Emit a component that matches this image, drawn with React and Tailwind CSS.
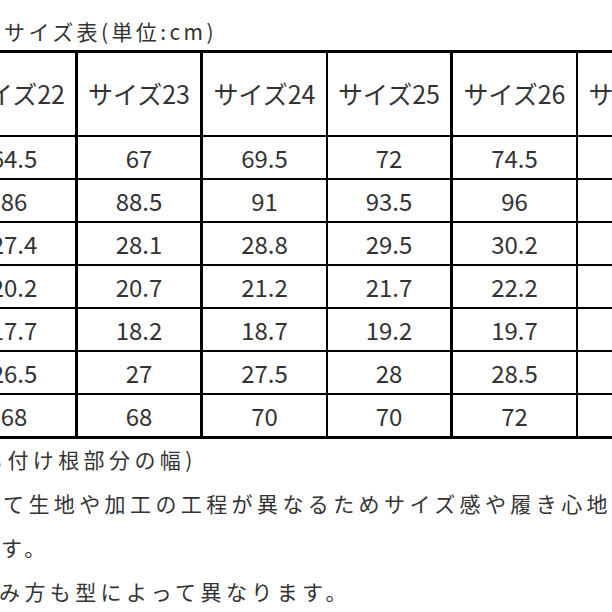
import React from 'react';

const sizes = ['サイズ22', 'サイズ23', 'サイズ24', 'サイズ25', 'サイズ26', 'サイズ27'];

// rows of measurements, the last column is left blank as in the source
const rows = [
  ['64.5', '67', '69.5', '72', '74.5', ''],
  ['86', '88.5', '91', '93.5', '96', ''],
  ['27.4', '28.1', '28.8', '29.5', '30.2', ''],
  ['20.2', '20.7', '21.2', '21.7', '22.2', ''],
  ['17.7', '18.2', '18.7', '19.2', '19.7', ''],
  ['26.5', '27', '27.5', '28', '28.5', ''],
  ['68', '68', '70', '70', '72', ''],
];

// right border per column
const colBorder = [
  'border-r-[3px]',
  'border-r-[3px]',
  'border-r-2',
  'border-r-[3px]',
  'border-r-2',
  'border-r-2',
];

const Cell = ({ i, children, className = '' }) => (
  <div
    className={`w-[125px] shrink-0 border-black flex items-center justify-center ${colBorder[i]} ${className}`}
  >
    {children}
  </div>
);

const App = () => {
  return (
    <div className="w-[612px] h-[612px] overflow-hidden bg-white text-[#333] font-['Noto_Sans_CJK_JP','Noto_Sans',sans-serif]">
      {/* Title */}
      <div className="h-[50px] pl-[4px] pt-[17px] text-[21px] leading-[28px] tracking-[3.4px] whitespace-nowrap">
        サイズ表(単位:cm)
      </div>

      {/* Table */}
      <div className="ml-[-47px] w-[760px]">
        <div className="flex h-[87px] border-t-[3px] border-b-2 border-black text-[25px]">
          {sizes.map((s, i) => (
            <Cell key={s} i={i}>
              <span className="whitespace-nowrap">{s}</span>
            </Cell>
          ))}
        </div>
        {rows.map((r, ri) => (
          <div
            key={ri}
            className={`flex h-[43px] border-black text-[24px] ${
              ri === rows.length - 1 ? 'border-b-[3px] h-[44px]' : 'border-b-2'
            }`}
          >
            {r.map((v, i) => (
              <Cell key={i} i={i}>
                {v}
              </Cell>
            ))}
          </div>
        ))}
      </div>

      {/* Notes */}
      <div className="mt-[-2px] text-[21px] leading-[44px] tracking-[4.4px] whitespace-nowrap">
        <div className="ml-[-18px]">も付け根部分の幅)</div>
        <div className="ml-[3px]">て生地や加工の工程が異なるためサイズ感や履き心地が異なりま</div>
        <div className="ml-[1px]">す。</div>
        <div className="ml-[-1px]">み方も型によって異なります。</div>
      </div>
    </div>
  );
};

export default App;
